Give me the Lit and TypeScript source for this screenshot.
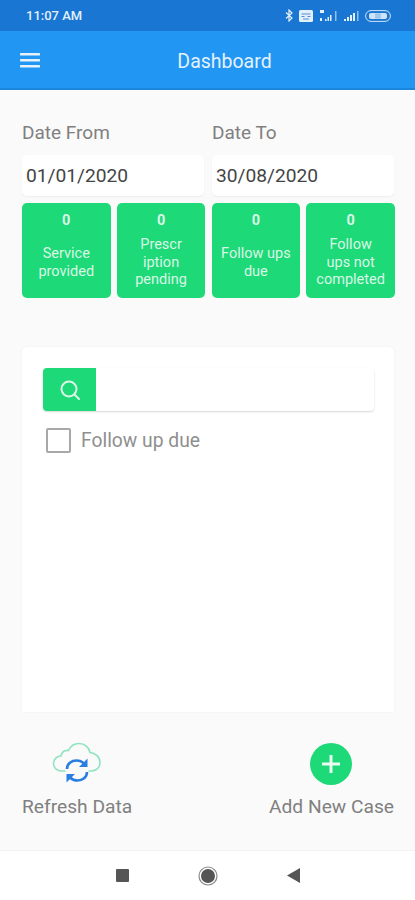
import { html, LitElement, css } from 'lit';
import { customElement } from 'lit/decorators.js';

const TILES = [
  { count: 0, lines: ['Service', 'provided'] },
  { count: 0, lines: ['Prescr', 'iption', 'pending'] },
  { count: 0, lines: ['Follow ups', 'due'] },
  { count: 0, lines: ['Follow', 'ups not', 'completed'] },
];

@customElement('app-root')
export class AppRoot extends LitElement {
  static styles = css`
    :host {
      display: block;
      width: 415px;
      height: 900px;
      overflow: hidden;
      background: #fafafa;
      font-family: Roboto, "Liberation Sans", sans-serif;
      color: #757575;
    }

    .page {
      display: flex;
      flex-direction: column;
      height: 900px;
    }

    /* Status bar */
    .status {
      height: 31px;
      flex: none;
      box-sizing: border-box;
      padding: 0 24px 0 26px;
      display: flex;
      align-items: center;
      justify-content: space-between;
      background: #1976d2;
      color: #e3f0fb;
      font-size: 13px;
      font-weight: 500;
    }

    .status-icons {
      display: flex;
      align-items: center;
      gap: 6px;
    }

    /* App bar */
    .appbar {
      height: 59px;
      flex: none;
      box-sizing: border-box;
      position: relative;
      display: flex;
      align-items: center;
      justify-content: center;
      background: #2196f3;
      border-bottom: 2px solid #1a86dc;
      color: #e3f2fd;
      font-size: 19.5px;
      padding: 3px 0 0 34px;
    }

    .menu {
      position: absolute;
      left: 20px;
      top: 22px;
    }

    /* Main content */
    .content {
      flex: 1;
      min-height: 0;
      padding: 0 21px 0 22px;
      display: flex;
      flex-direction: column;
    }

    .dates {
      display: grid;
      grid-template-columns: 182px 182px;
      column-gap: 8px;
      padding-top: 32px;
    }

    .date-label {
      font-size: 19px;
      line-height: 22px;
      margin-bottom: 11px;
      color: #808080;
    }

    .date-input {
      height: 41px;
      box-sizing: border-box;
      padding: 0 4px;
      display: flex;
      align-items: center;
      background: #fff;
      border-radius: 5px;
      box-shadow: 0 1px 2px rgba(0, 0, 0, 0.06);
      color: #444;
      font-size: 19.2px;
    }

    .tiles {
      display: grid;
      grid-template-columns: repeat(4, 88.5px);
      column-gap: 6.3px;
      margin-top: 7px;
    }

    .tile {
      height: 95px;
      box-sizing: border-box;
      padding: 10px 2px 0;
      display: flex;
      flex-direction: column;
      align-items: center;
      background: #1ed978;
      border-radius: 5px;
      color: #d9f7e6;
      text-align: center;
      font-size: 14.5px;
      line-height: 17.5px;
    }

    .tile-count {
      font-weight: 700;
      line-height: 16px;
    }

    .tile-label {
      flex: 1;
      display: flex;
      flex-direction: column;
      justify-content: center;
      padding-bottom: 2px;
    }

    .card {
      flex: 1;
      min-height: 0;
      margin-top: 49px;
      padding: 21px 20px 0 21px;
      background: #fff;
      border-radius: 5px 5px 0 0;
      box-shadow: 0 0 2px rgba(0, 0, 0, 0.07);
    }

    .search {
      height: 43px;
      display: flex;
      background: #fff;
      border-radius: 4px;
      box-shadow: 0 1px 2px rgba(0, 0, 0, 0.16);
    }

    .search-btn {
      width: 53px;
      display: flex;
      align-items: center;
      justify-content: center;
      background: #1ed978;
      border-radius: 4px 0 0 4px;
    }

    .check-row {
      display: flex;
      align-items: center;
      gap: 10px;
      margin: 17px 0 0 3px;
      font-size: 19.3px;
      color: #8f8f8f;
    }

    .checkbox {
      width: 25px;
      height: 25px;
      box-sizing: border-box;
      border: 2px solid #a8a8a8;
      border-radius: 2px;
    }

    /* Bottom actions */
    .actions {
      height: 138px;
      flex: none;
      box-sizing: border-box;
      padding: 30px 21px 0 22px;
      display: flex;
      justify-content: space-between;
      font-size: 19.2px;
      color: #808080;
    }

    .action {
      display: flex;
      flex-direction: column;
      align-items: center;
      gap: 10px;
      line-height: 22px;
    }

    .action-icon {
      height: 44px;
      display: flex;
      align-items: center;
      justify-content: center;
    }

    .add-icon {
      margin-right: 2px;
    }

    /* System nav bar */
    .nav {
      height: 50px;
      flex: none;
      display: flex;
      align-items: center;
      justify-content: center;
      gap: 69px;
      background: #fff;
      border-top: 1px solid #f2f2f2;
      box-sizing: border-box;
    }
  `;

  private renderStatusIcons() {
    return html`
      <div class="status-icons">
        <svg width="8" height="13" viewBox="0 0 8 13" fill="none" stroke="#e3f0fb" stroke-width="1.2">
          <path d="M1 3.5l6 5.5-3 3V1l3 3-6 5.5" />
        </svg>
        <svg width="14" height="12" viewBox="0 0 14 12">
          <rect width="14" height="12" rx="1.5" fill="#e3f0fb" />
          <path d="M2.500 4h9M2.500 6.500h3M8.500 6.500h3M4 9h6" stroke="#4a90d9" stroke-width="1" />
        </svg>
        <svg width="19" height="12" viewBox="0 0 19 12" fill="#e3f0fb">
          <path d="M1 0h4v3H1zM1 8h2v3H1z" />
          <path d="M6 9h1.500v2H6zM8.500 7H10v4H8.500zM11 5h1.500v6H11z" />
          <path d="M16 1h1.500v10H16z" fill="#8fc1ee" />
        </svg>
        <svg width="15" height="11" viewBox="0 0 15 11" fill="#e3f0fb">
          <path d="M0 9h2v2H0zM3 7h2v4H3zM6 5h2v6H6zM9 3h2v8H9z" />
          <path d="M13 1h1.500v10H13z" fill="#8fc1ee" />
        </svg>
        <svg width="26" height="12" viewBox="0 0 26 12">
          <rect x=".6" y=".6" width="24.8" height="10.8" rx="5.4" fill="none" stroke="#cfe4f7" stroke-width="1" />
          <rect x="4" y="3" width="18" height="6" rx="2" fill="#cfe4f7" />
          <path d="M10 4.2h6M10 6h6M10 7.8h6" stroke="#5b9fe0" stroke-width=".7" />
        </svg>
      </div>
    `;
  }

  private renderCloudIcon() {
    return html`
      <svg width="50" height="44" viewBox="0 0 50 44" fill="none">
        <path
          d="M13 29H9C4 29 1.500 25 1.500 21.500C1.500 17 5 14 9 14C10 9.500 13 8 16.500 8.500C18.500 4 22 1.500 27 1.500C33 1.500 37 5.500 38 10.500C43.500 11 48 15 48 20.500C48 25.500 44.500 29 39 29H37"
          stroke="#8ee3c0"
          stroke-width="1.6"
          stroke-linecap="round"
        />
        <path
          d="M15 27C15 21.500 19.500 18.500 24.500 18.500C27.500 18.500 30 19.500 32 21.500"
          stroke="#2a7de1"
          stroke-width="2.600"
        />
        <path d="M35.500 16.500V25H27z" fill="#2a7de1" />
        <path
          d="M35 30C35 35.500 30.500 38.500 25.500 38.500C22.500 38.500 20 37.500 18 35.500"
          stroke="#2a7de1"
          stroke-width="2.600"
        />
        <path d="M14.500 40.500V32H23z" fill="#2a7de1" />
      </svg>
    `;
  }

  protected render() {
    return html`
      <div class="page">
        <div class="status">
          <span>11:07 AM</span>
          ${this.renderStatusIcons()}
        </div>
        <header class="appbar">
          <svg class="menu" width="20" height="15" viewBox="0 0 20 15" fill="#e3f2fd">
            <rect width="20" height="2.400" y="0" rx=".5" />
            <rect width="20" height="2.400" y="6" rx=".5" />
            <rect width="20" height="2.400" y="12" rx=".5" />
          </svg>
          Dashboard
        </header>

        <main class="content">
          <div class="dates">
            <div>
              <div class="date-label">Date From</div>
              <div class="date-input">01/01/2020</div>
            </div>
            <div>
              <div class="date-label">Date To</div>
              <div class="date-input">30/08/2020</div>
            </div>
          </div>

          <div class="tiles">
            ${TILES.map(
              (tile) => html`
                <div class="tile">
                  <div class="tile-count">${tile.count}</div>
                  <div class="tile-label">
                    ${tile.lines.map((line) => html`<div>${line}</div>`)}
                  </div>
                </div>
              `
            )}
          </div>

          <section class="card">
            <div class="search">
              <div class="search-btn">
                <svg width="22" height="22" viewBox="0 0 22 22" fill="none" stroke="#d9f7e6" stroke-width="2">
                  <circle cx="10" cy="10" r="7.500" />
                  <path d="M15.500 15.500L20 20" stroke-linecap="round" />
                </svg>
              </div>
            </div>
            <label class="check-row">
              <span class="checkbox"></span>
              Follow up due
            </label>
          </section>
        </main>

        <div class="actions">
          <div class="action">
            <div class="action-icon">${this.renderCloudIcon()}</div>
            <div>Refresh Data</div>
          </div>
          <div class="action">
            <div class="action-icon add-icon">
              <svg width="42" height="42" viewBox="0 0 42 42">
                <circle cx="21" cy="21" r="21" fill="#1ed978" />
                <path d="M21 12v18M12 21h18" stroke="#eafbf2" stroke-width="3" />
              </svg>
            </div>
            <div>Add New Case</div>
          </div>
        </div>

        <nav class="nav">
          <svg width="13" height="13" viewBox="0 0 13 13"><rect width="13" height="13" rx="1" fill="#555" /></svg>
          <svg width="20" height="20" viewBox="0 0 20 20">
            <circle cx="10" cy="10" r="9" fill="none" stroke="#888" stroke-width="1.200" />
            <circle cx="10" cy="10" r="7" fill="#555" />
          </svg>
          <svg width="13" height="15" viewBox="0 0 13 15"><path d="M13 0v15L0 7.500z" fill="#555" /></svg>
        </nav>
      </div>
    `;
  }
}
